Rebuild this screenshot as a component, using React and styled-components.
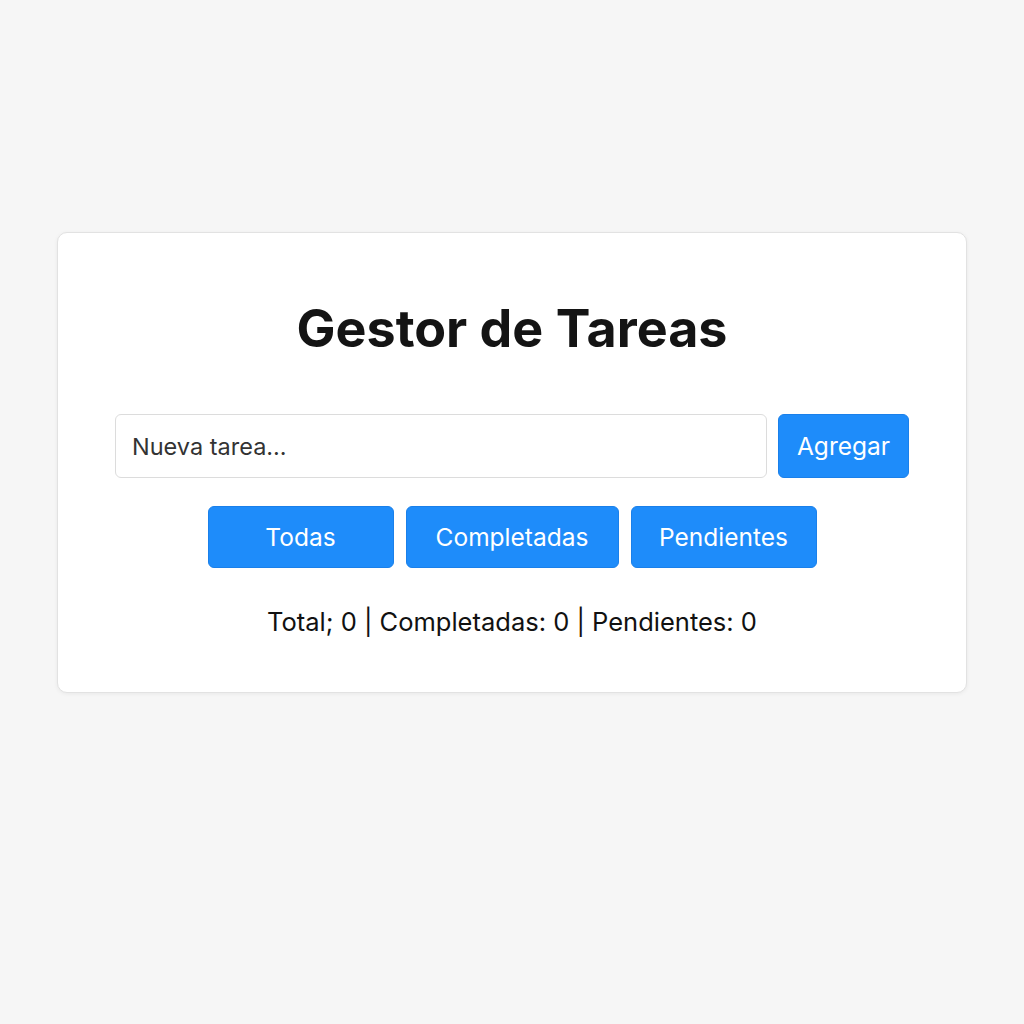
import * as React from "react";
import styled, { createGlobalStyle } from "styled-components";

const GlobalStyle = createGlobalStyle`
  html, body {
    margin: 0;
    padding: 0;
    background: #f6f6f6;
    font-family: Inter, "Noto Sans", "Liberation Sans", sans-serif;
  }
`;

const Page = styled.main`
  min-height: 1024px;
  padding: 232px 57px 0;
  box-sizing: border-box;
`;

const Card = styled.section`
  background: #ffffff;
  border: 1px solid #e2e2e2;
  border-radius: 10px;
  box-shadow: 0 1px 4px rgba(0, 0, 0, 0.06);
  padding: 64px 57px 55px;
  display: flex;
  flex-direction: column;
  align-items: center;
`;

const Title = styled.h1`
  margin: 0 0 54px;
  font-size: 52px;
  font-weight: 700;
  color: #141414;
`;

const InputRow = styled.div`
  display: flex;
  gap: 11px;
  width: 100%;
`;

const TaskInput = styled.input`
  flex: 1;
  height: 64px;
  box-sizing: border-box;
  border: 1px solid #dcdcdc;
  border-radius: 6px;
  padding: 0 16px;
  font-family: inherit;
  font-size: 23.5px;
  color: #222;
  outline: none;
  &::placeholder {
    color: #333;
  }
`;

const Button = styled.button`
  height: ${(p) => p.$height || 62}px;
  width: ${(p) => p.$width}px;
  box-sizing: border-box;
  padding: 0;
  background: #1e8cfa;
  border: 1px solid #1a80ea;
  border-radius: 6px;
  color: #ffffff;
  font-family: inherit;
  font-size: 24.5px;
  cursor: pointer;
`;

const FilterRow = styled.div`
  display: flex;
  justify-content: center;
  gap: 12px;
  margin-top: 28px;
`;

const Stats = styled.p`
  margin: 38px 0 0;
  font-size: 25.5px;
  color: #111;
`;

export default function App() {
  const [text, setText] = React.useState("");
  return (
    <>
      <GlobalStyle />
      <Page>
        <Card>
          <Title>Gestor de Tareas</Title>
          <InputRow>
            <TaskInput
              placeholder="Nueva tarea..."
              value={text}
              onChange={(e) => setText(e.target.value)}
            />
            <Button $height={64} $width={131}>
              Agregar
            </Button>
          </InputRow>
          <FilterRow>
            <Button $width={186}>Todas</Button>
            <Button $width={213}>Completadas</Button>
            <Button $width={186}>Pendientes</Button>
          </FilterRow>
          <Stats>Total; 0 | Completadas: 0 | Pendientes: 0</Stats>
        </Card>
      </Page>
    </>
  );
}
